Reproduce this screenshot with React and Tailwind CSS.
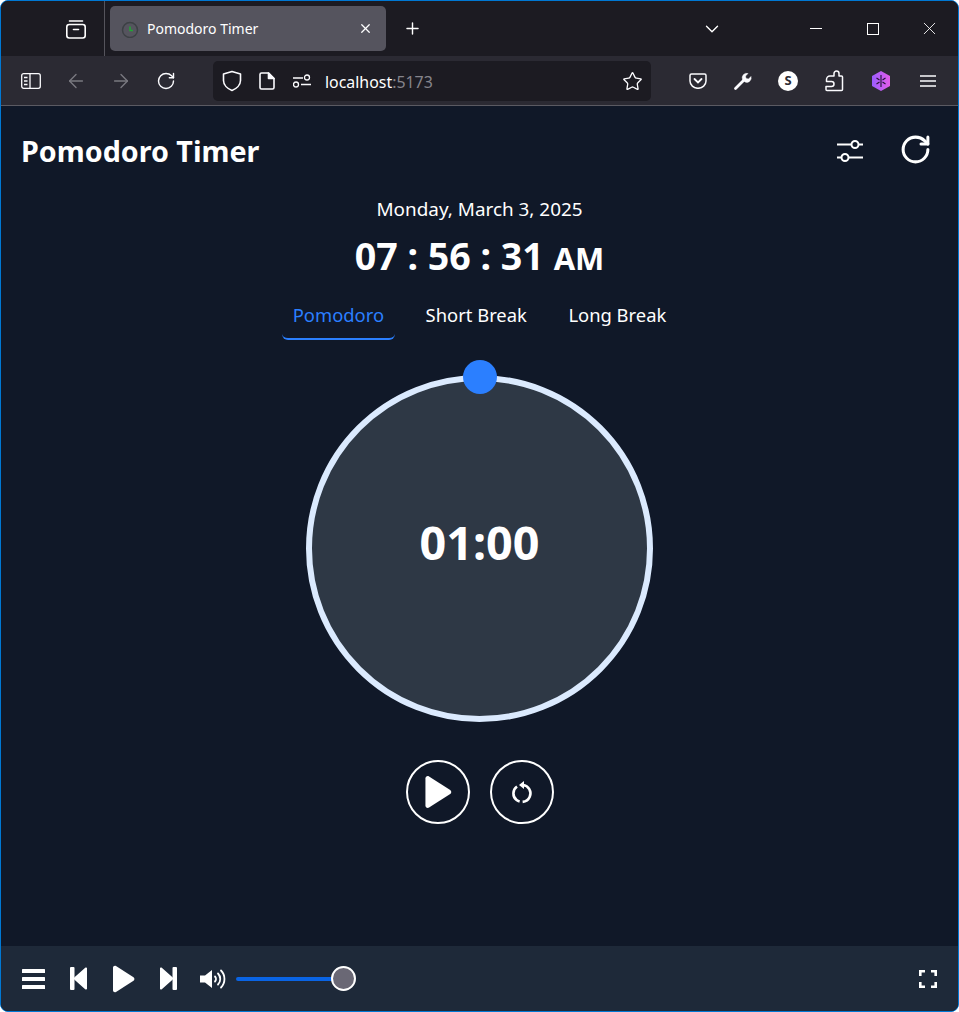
import { ArrowLeft, ArrowRight, RotateCw, Star, Plus, X, ChevronDown } from "lucide-react";

const PlayIcon = ({ className }) => (
  <svg viewBox="0 0 24 28" className={className} fill="currentColor">
    <path d="M2 2.800c0-1.600 1.600-2.500 3-1.700l17.500 11.200c1.200.8 1.200 2.600 0 3.400L5 26.900c-1.400.8-3 0-3-1.700z" />
  </svg>
);

const BrowserTabs = () => (
  <div className="flex h-[55px] items-center bg-[#1c1b22] text-white">
    <div className="flex h-full w-[104px] items-center justify-end border-r border-[#55545c] pr-[17px]">
      <svg viewBox="0 0 22 22" className="h-[22px] w-[22px]" fill="none" stroke="currentColor" strokeWidth="1.600">
        <path d="M4.500 3h13" strokeLinecap="round" />
        <rect x="1.800" y="6.500" width="18.400" height="13.500" rx="2.500" />
        <path d="M8.500 11.500h5" strokeLinecap="round" />
      </svg>
    </div>
    <div className="ml-[5px] flex h-[45px] w-[276px] items-center rounded-[5px] bg-[#55545e] pl-[11px] pr-[13px]">
      <svg viewBox="0 0 18 18" className="mr-[8px] h-[18px] w-[18px]" fill="none">
        <circle cx="9" cy="10" r="7.500" stroke="#3c4044" strokeWidth="1.500" />
        <path d="M9 6.500V10.500H12" stroke="#22a534" strokeWidth="1.500" />
      </svg>
      <span className="flex-1 text-[14px] text-white">Pomodoro Timer</span>
      <X size={15} strokeWidth={2} />
    </div>
    <Plus size={19} strokeWidth={1.800} className="ml-[17px]" />
    <div className="flex-1" />
    <ChevronDown size={22} strokeWidth={1.500} className="mr-[87px]" />
    <div className="mr-[45px] h-px w-[12px] bg-white" />
    <div className="mr-[40px] h-[12px] w-[12px] border border-white" />
    <X size={21} strokeWidth={1} className="mr-[18px]" />
  </div>
);

const BrowserToolbar = () => (
  <div className="flex h-[50px] items-center border-b border-[#5b5a62] bg-[#2b2a33] pt-[1px] text-[#fbfbfe]">
    <svg viewBox="0 0 20 16" className="ml-[20px] h-[16px] w-[20px]" fill="none" stroke="currentColor" strokeWidth="1.300">
      <rect x="0.700" y="0.700" width="18.600" height="14.600" rx="2" />
      <path d="M9 1v14M3 4.500h3.500M3 8h3.500M3 11.500h3.500" />
    </svg>
    <ArrowLeft size={22} strokeWidth={1.500} className="ml-[24px] text-[#7a7980]" />
    <ArrowRight size={22} strokeWidth={1.500} className="ml-[23px] text-[#7a7980]" />
    <RotateCw size={20} strokeWidth={1.700} className="ml-[24px]" />
    <div className="ml-[37px] flex h-[40px] w-[438px] items-center rounded-[5px] bg-[#1c1b22] pl-[9px] pr-[8px]">
      <svg viewBox="0 0 20 22" className="h-[22px] w-[20px]" fill="none" stroke="currentColor" strokeWidth="1.600" strokeLinejoin="round">
        <path d="M10 1.500L18.500 4V10.500C18.500 15 14.500 18.800 10 20.500C5.500 18.800 1.500 15 1.500 10.500V4z" />
      </svg>
      <svg viewBox="0 0 16 18" className="ml-[17px] h-[18px] w-[16px]" fill="none" stroke="currentColor" strokeWidth="1.600" strokeLinejoin="round">
        <path d="M2.500 1H9.500L15 6.500V15.500A1.500 1.500 0 0 1 13.500 17H2.500A1.500 1.500 0 0 1 1 15.500V2.500A1.500 1.500 0 0 1 2.500 1z" />
        <path d="M9.500 1V6.500H15z" fill="currentColor" />
      </svg>
      <svg viewBox="0 0 18 14" className="ml-[18px] h-[14px] w-[18px]" fill="none" stroke="currentColor" strokeWidth="1.300">
        <path d="M0 4h10M8 10.500h10" />
        <circle cx="14" cy="3.500" r="2.500" />
        <circle cx="3" cy="10.500" r="2.500" />
      </svg>
      <span className="ml-[14px] flex-1 pt-[3px] text-[15.900px] text-white">
        localhost<span className="text-[#85848b]">:5173</span>
      </span>
      <Star size={21} strokeWidth={1.500} />
    </div>
    <svg viewBox="0 0 18 16" className="ml-[38px] h-[16px] w-[18px]" fill="none" stroke="currentColor" strokeWidth="1.500">
      <path d="M2.500 1h13A1.500 1.500 0 0 1 17 2.500V8a8 7.300 0 0 1-16 0V2.500A1.500 1.500 0 0 1 2.500 1z" />
      <path d="M5.500 6l3.500 3.500L12.500 6" strokeLinecap="round" strokeWidth="1.800" />
    </svg>
    <svg viewBox="0 0 20 20" className="ml-[26px] h-[20px] w-[20px]" fill="currentColor" stroke="currentColor">
      <path d="M2.500 17.500L10.500 9.500" strokeWidth="2.800" strokeLinecap="round" />
      <path d="M9.500 8.500A4.500 4.500 0 0 1 15 2.500L12.500 5L13 7.500L15.500 8L18 5.500A4.500 4.500 0 0 1 12 11z" strokeWidth="0.500" />
    </svg>
    <div className="ml-[25px] flex h-[20px] w-[20px] items-center justify-center rounded-full bg-white text-[13px] font-bold text-[#2b2a33]">
      S
    </div>
    <svg viewBox="0 0 20 22" className="ml-[26px] h-[22px] w-[20px]" fill="none" stroke="currentColor" strokeWidth="1.500" strokeLinejoin="round">
      <path d="M10 6V3.500a2.500 2.500 0 0 1 5 0V6H17.500A1 1 0 0 1 18.500 7V19.500A1 1 0 0 1 17.500 20.500H3A1 1 0 0 1 2 19.500V16.500H7.500A2.500 2.500 0 0 0 7.500 11.500H2.500V9.500A3.500 3.500 0 0 1 6 6z" />
    </svg>
    <svg viewBox="0 0 20 22" className="ml-[27px] h-[22px] w-[20px]">
      <defs>
        <linearGradient id="hex" x1="0" x2="1" y1="0" y2="0">
          <stop offset="0" stopColor="#9a5cff" />
          <stop offset="1" stopColor="#e35ce8" />
        </linearGradient>
      </defs>
      <path d="M10 1l9 5v10l-9 5-9-5V6z" fill="url(#hex)" />
      <path d="M10 5v12M5.500 8l3 2M5.500 14l3-2M14.500 8l-3 2M14.500 14l-3-2" stroke="#20132f" strokeWidth="1.100" />
    </svg>
    <svg viewBox="0 0 16 12" className="ml-[29px] h-[12px] w-[16px]" fill="none" stroke="currentColor" strokeWidth="1.400">
      <path d="M0 1h16M0 6h16M0 11h16" />
    </svg>
  </div>
);

const Tab = ({ label, active }) => (
  <button
    className={
      active
        ? "rounded-b-[6px] border-b-2 border-[#2b7fff] px-[10.500px] pb-[9px] pt-[9px] text-[#2b7fff]"
        : "border-b-2 border-transparent px-[10.500px] pb-[9px] pt-[9px] text-white"
    }
  >
    {label}
  </button>
);

const TimerDial = () => (
  <div className="relative mt-[35px] flex h-[347px] w-[347px] items-center justify-center rounded-full border-[6px] border-[#dbeafe] bg-[#2e3845]">
    <div className="absolute left-1/2 top-[-21px] h-[34px] w-[34px] -translate-x-1/2 rounded-full bg-[#2b7fff]" />
    <span className="mb-[12px] text-[46.700px] font-bold leading-none text-white">01:00</span>
  </div>
);

const PlayerBar = () => (
  <div className="flex h-[65px] items-center bg-[#1e2939] pl-[21px] text-white">
    <svg viewBox="0 0 23 20" className="h-[20px] w-[23px]" fill="currentColor">
      <rect y="0" width="23" height="4" rx="0.500" />
      <rect y="8" width="23" height="4" rx="0.500" />
      <rect y="16" width="23" height="4" rx="0.500" />
    </svg>
    <svg viewBox="0 0 17 23" className="ml-[25px] h-[23px] w-[17px]" fill="currentColor">
      <rect x="0" y="0" width="4.500" height="23" rx="1" />
      <path d="M17 1.500v20c0 1-1 1.300-1.800.8L4.500 12.800c-.7-.5-.7-2 0-2.600L15.200.7c.8-.5 1.800-.2 1.800.8z" />
    </svg>
    <PlayIcon className="ml-[24px] h-[28px] w-[24px]" />
    <svg viewBox="0 0 17 23" className="ml-[25px] h-[23px] w-[17px]" fill="currentColor">
      <rect x="12.500" y="0" width="4.500" height="23" rx="1" />
      <path d="M0 1.500v20c0 1 1 1.300 1.800.8l10.700-9.500c.7-.5.700-2 0-2.600L1.800.7C1 .2 0 .5 0 1.500z" />
    </svg>
    <svg viewBox="0 0 26 20" className="ml-[23px] h-[20px] w-[26px]" fill="none" stroke="currentColor">
      <path d="M0 6.500h5L12 1v18l-7-5.500H0z" fill="currentColor" stroke="none" />
      <path d="M15 7.500c1.300 1.300 1.300 3.700 0 5" strokeWidth="1.800" strokeLinecap="round" />
      <path d="M18 4.500c3 3 3 8 0 11" strokeWidth="1.800" strokeLinecap="round" />
      <path d="M21 1.500c4.600 4.600 4.600 12.400 0 17" strokeWidth="1.800" strokeLinecap="round" />
    </svg>
    <div className="relative ml-[10px] h-[4px] w-[108px] rounded-full bg-[#0a64e4]">
      <div className="absolute left-[95px] top-[-11px] h-[25px] w-[25px] rounded-full border-2 border-white bg-[#6a6875]" />
    </div>
    <div className="flex-1" />
    <svg viewBox="0 0 18 18" className="mr-[21px] h-[18px] w-[18px]" fill="none" stroke="currentColor" strokeWidth="2.600">
      <path d="M1.300 6V1.300H6M12 1.300h4.700V6M16.700 12v4.700H12M6 16.700H1.300V12" />
    </svg>
  </div>
);

export default function App() {
  return (
    <div className="flex h-[1012px] w-[959px] flex-col overflow-hidden rounded-lg border border-[#0078d4] bg-[#101828] font-['Noto_Sans',sans-serif]">
      <BrowserTabs />
      <BrowserToolbar />
      <main className="flex min-h-0 flex-1 flex-col items-center">
        <header className="flex w-full items-center justify-between pl-[20px] pr-[26px] pt-[25px] text-white">
          <h1 className="text-[28.700px] font-bold leading-[40px]">Pomodoro Timer</h1>
          <div className="flex items-center gap-[35px]">
            <svg viewBox="0 0 28 24" className="h-[24px] w-[28px]" fill="none" stroke="currentColor" strokeWidth="2">
              <path d="M1 5.500h15M22 5.500h5M1 18.500h5M12 18.500h15" />
              <circle cx="19" cy="5.500" r="3.500" />
              <circle cx="9" cy="18.500" r="3.500" />
            </svg>
            <RotateCw size={33} strokeWidth={2.200} className="-translate-y-[2px]" />
          </div>
        </header>
        <p className="mt-[24px] text-[18.900px] leading-[28px] text-white">Monday, March 3, 2025</p>
        <p className="mt-[13px] text-[37.600px] font-bold leading-[40px] text-white">
          07 : 56 : 31 <span className="text-[31px]">AM</span>
        </p>
        <nav className="mt-[14px] flex gap-[20.500px] text-[18.400px] leading-[28px]">
          <Tab label="Pomodoro" active />
          <Tab label="Short Break" />
          <Tab label="Long Break" />
        </nav>
        <TimerDial />
        <div className="mt-[38px] flex gap-[20px] text-white">
          <button className="flex h-[64px] w-[64px] items-center justify-center rounded-full border-2 border-white">
            <PlayIcon className="h-[34px] w-[29px]" />
          </button>
          <button className="flex h-[64px] w-[64px] items-center justify-center rounded-full border-2 border-white">
            <svg viewBox="0 0 24 24" className="h-[24px] w-[24px]" fill="none" stroke="currentColor" strokeWidth="2.600">
              <path d="M7 6.500a8.500 8.500 0 1 0 6-1.500" strokeDasharray="19 3 30" />
              <path d="M14 1v8l-5-4z" fill="currentColor" stroke="none" />
            </svg>
          </button>
        </div>
      </main>
      <PlayerBar />
    </div>
  );
}
